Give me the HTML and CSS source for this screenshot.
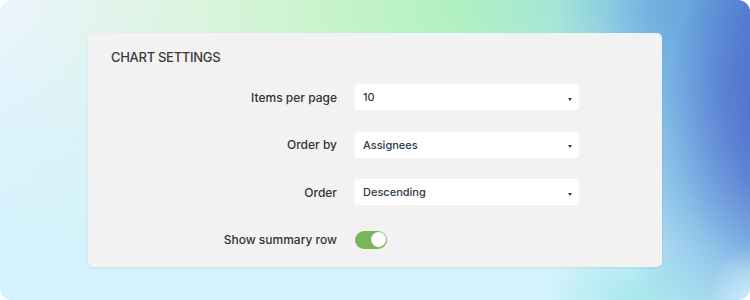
FILE: index.html
```html
<!DOCTYPE html>
<html lang="en">
<head>
    <meta charset="UTF-8">
    <meta name="viewport" content="width=device-width, initial-scale=1.0">
    <title>Chart Settings</title>
    <link rel="stylesheet" href="styles.css">
</head>
<body>
    <div class="frame">
        <section class="card">
            <h2 class="card-title">CHART SETTINGS</h2>
            <div class="settings">
                <label class="field-label">Items per page</label>
                <div class="select"><span>10</span><i class="caret"></i></div>

                <label class="field-label">Order by</label>
                <div class="select"><span>Assignees</span><i class="caret"></i></div>

                <label class="field-label">Order</label>
                <div class="select"><span>Descending</span><i class="caret"></i></div>

                <label class="field-label">Show summary row</label>
                <div class="toggle-cell">
                    <span class="toggle on"><span class="knob"></span></span>
                </div>
            </div>
        </section>
    </div>
</body>
</html>
```

FILE: styles.css
```css
body {
    margin: 0;
    background: #ffffff;
    font-family: 'Inter', 'Noto Sans', sans-serif;
}
.frame {
    width: 750px;
    height: 300px;
    box-sizing: border-box;
    padding: 33px 88px;
    border-radius: 12px;
    overflow: hidden;
    background:
        radial-gradient(ellipse 45px 55px at 752px 302px, rgba(214, 238, 252, 0.95), rgba(214, 238, 252, 0) 100%),
        radial-gradient(ellipse 200px 280px at 795px 110px, rgba(72, 96, 198, 1) 0%, rgba(82, 122, 210, 0.85) 35%, rgba(104, 172, 222, 0.6) 65%, rgba(120, 190, 225, 0) 100%),
        radial-gradient(ellipse 90px 60px at 640px 295px, rgba(160, 230, 234, 0.9), rgba(160, 230, 234, 0) 100%),
        linear-gradient(180deg, rgba(212, 242, 252, 0) 5%, rgba(212, 242, 252, 0.6) 45%, rgba(210, 242, 252, 1) 92%),
        linear-gradient(90deg, #ebf4fd 0%, #dcf4e0 25%, #c6f4c8 45%, #aff0c0 62%, #a4e6d8 74%, #82c2e4 84%, #6a9edc 92%, #4a66c8 100%);
}
.card {
    background: #f2f2f2;
    border-radius: 5px;
    height: 234px;
    box-sizing: border-box;
    padding: 14px 23px;
    box-shadow: 0 1px 3px rgba(0, 0, 0, 0.08);
}
.card-title {
    margin: 0 0 17px;
    font-size: 13px;
    line-height: 20px;
    font-weight: 500;
    color: #3a3a3a;
    letter-spacing: -0.3px;
}
.settings {
    display: grid;
    grid-template-columns: 226px 224px;
    grid-auto-rows: 26px;
    column-gap: 18px;
    row-gap: 21.5px;
    align-items: center;
}
.field-label {
    text-align: right;
    font-size: 12px;
    font-weight: 500;
    color: #333333;
}
.select {
    height: 26px;
    background: #ffffff;
    border-radius: 3px;
    display: flex;
    align-items: center;
    justify-content: space-between;
    padding: 0 7px 0 8px;
    font-size: 11px;
    font-weight: 500;
    color: #2c3a4b;
}
.caret {
    width: 0;
    height: 0;
    border-left: 2.5px solid transparent;
    border-right: 2.5px solid transparent;
    border-top: 3px solid #333a44;
    margin-top: 4px;
}
.toggle-cell {
    display: flex;
    align-items: center;
}
.toggle {
    width: 32px;
    height: 18px;
    border-radius: 9px;
    background: #7ab559;
    display: flex;
    align-items: center;
    box-sizing: border-box;
    padding: 1.5px;
}
.toggle.on {
    justify-content: flex-end;
}
.knob {
    width: 15px;
    height: 15px;
    border-radius: 50%;
    background: #ffffff;
}
```
